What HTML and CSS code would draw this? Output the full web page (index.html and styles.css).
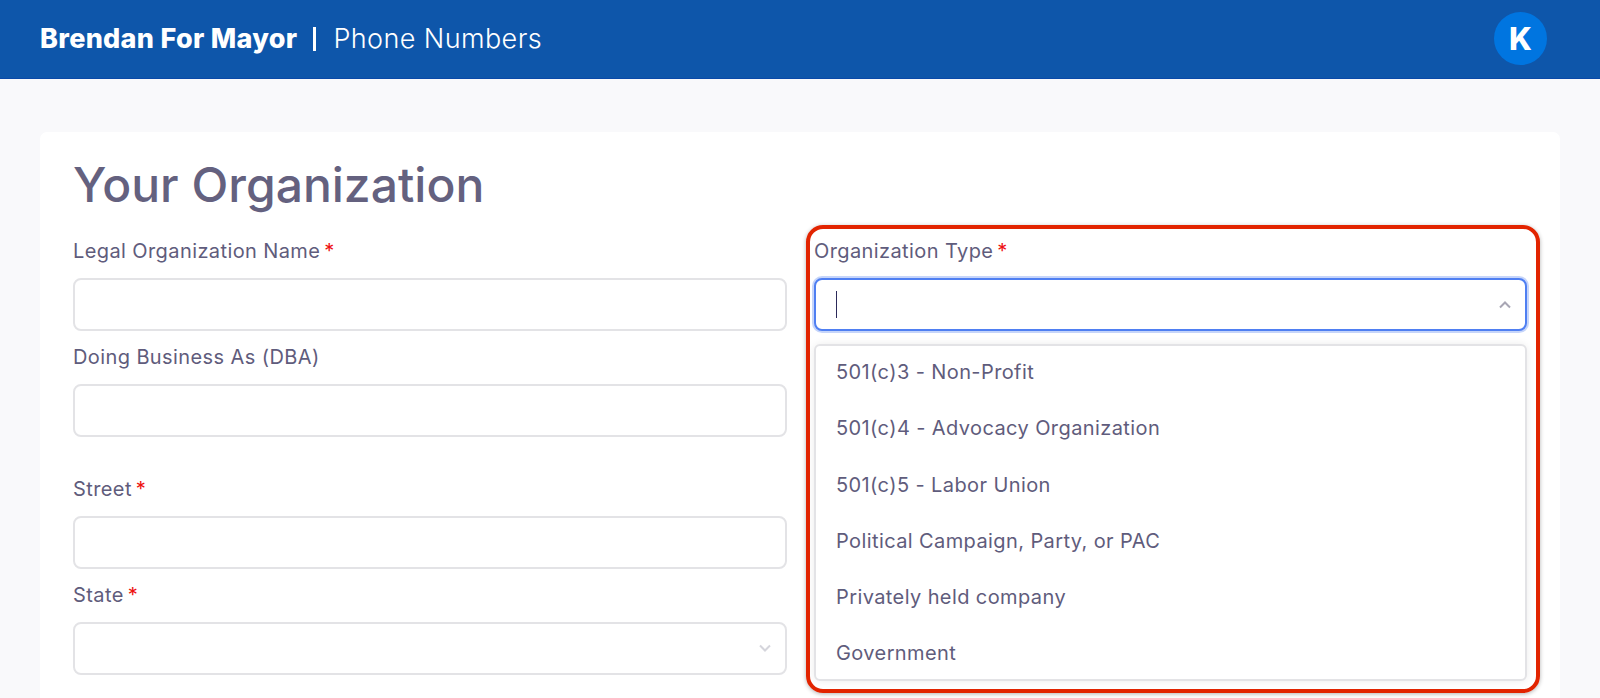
FILE: index.html
```html
<!DOCTYPE html>
<html lang="en">
<head>
<meta charset="utf-8">
<title>Phone Numbers</title>
<link rel="stylesheet" href="styles.css">
</head>
<body>
<header class="topbar">
  <div class="crumbs">
    <span class="brand">Brendan For Mayor</span>
    <span class="sep"></span>
    <span class="page-name">Phone Numbers</span>
  </div>
  <div class="avatar">K</div>
</header>
<main class="main">
  <section class="card">
    <h1 class="title">Your Organization</h1>
    <div class="columns">
      <div class="col">
        <div class="field">
          <label class="label">Legal Organization Name<span class="req">*</span></label>
          <div class="input"></div>
        </div>
        <div class="field">
          <label class="label">Doing Business As (DBA)</label>
          <div class="input"></div>
        </div>
        <div class="field address">
          <label class="label">Street<span class="req">*</span></label>
          <div class="input"></div>
        </div>
        <div class="field">
          <label class="label">State<span class="req">*</span></label>
          <div class="input select">
            <svg class="chev chev-down" width="14" height="8" viewBox="0 0 14 8"><path d="M2 1.5 7 6.5 12 1.5" fill="none" stroke="#d5d5dc" stroke-width="2"/></svg>
          </div>
        </div>
      </div>
      <div class="col col-right">
        <div class="field">
          <label class="label">Organization Type<span class="req">*</span></label>
          <div class="input select focused">
            <span class="caret"></span>
            <svg class="chev" width="14" height="8" viewBox="0 0 14 8"><path d="M2 6.5 7 1.5 12 6.5" fill="none" stroke="#a8a6b4" stroke-width="2"/></svg>
          </div>
        </div>
        <ul class="menu">
          <li class="option">501(c)3 - Non-Profit</li>
          <li class="option">501(c)4 - Advocacy Organization</li>
          <li class="option">501(c)5 - Labor Union</li>
          <li class="option">Political Campaign, Party, or PAC</li>
          <li class="option">Privately held company</li>
          <li class="option">Government</li>
        </ul>
        <div class="highlight"></div>
      </div>
    </div>
  </section>
</main>
</body>
</html>
```
FILE: styles.css
```css
* { box-sizing: border-box; }
html, body { margin: 0; height: 698px; overflow: hidden; }
body {
  background: #f9f9fb;
  font-family: "Inter", "Liberation Sans", sans-serif;
  color: #5f5c7c;
}
.topbar {
  height: 79px;
  background: #0e56aa;
  border-bottom: 1px solid #0a49a8;
  display: flex;
  align-items: center;
  justify-content: space-between;
  padding: 0 53px 1px 40px;
  color: #fff;
}
.crumbs { display: flex; align-items: center; }
.brand { font-size: 27px; font-weight: 800; white-space: nowrap; letter-spacing: .3px; }
.sep { width: 3px; height: 24px; background: #fff; margin: 0 17px 0 16px; }
.page-name { font-size: 27px; font-weight: 300; letter-spacing: 0.4px; white-space: nowrap; }
.avatar {
  width: 53px; height: 53px; border-radius: 50%;
  background: #0075e0;
  display: flex; align-items: center; justify-content: center;
  font-size: 31px; font-weight: 800;
}
.main { padding: 53px 40px 0; }
.card {
  background: #fff;
  border-radius: 7px;
  padding: 20px 33px 40px;
  height: 600px;
}
.title {
  margin: 0 0 21px;
  font-size: 48px;
  line-height: 66px;
  font-weight: 500;
  color: #64617f;
}
.columns { display: grid; grid-template-columns: 714px 713px; column-gap: 27px; }
.col { position: relative; min-width: 0; }
.field { display: flex; flex-direction: column; height: 105.5px; }
.field.address { margin-top: 27px; }
.label { font-size: 20px; letter-spacing: .4px; line-height: 24px; height: 39px; font-weight: 400; white-space: nowrap; color: #5f5c7c; }
.req { color: #ee1111; margin-left: 4px; }
.input {
  height: 53px;
  flex: none;
  background: #fff;
  border: 2px solid #e3e3e6;
  border-radius: 8px;
  position: relative;
  display: flex;
  align-items: center;
  justify-content: space-between;
  padding: 0 13px 0 20px;
}
.input.select { justify-content: flex-end; }
.input.focused {
  justify-content: space-between;
  border-color: #4f7ff2;
  box-shadow: 0 0 0 2px #c6d5fa;
}
.caret { width: 1px; height: 27px; background: #2c2a5a; }
.menu {
  position: absolute;
  left: 0; right: 0; top: 105px;
  height: 337px;
  margin: 0;
  padding: 12px 0;
  list-style: none;
  background: #fff;
  border: 2px solid #e3e3e6;
  border-radius: 6px;
  box-shadow: 0 0 8px rgba(0,0,0,.08);
  display: flex;
  flex-direction: column;
  gap: 28.3px;
}
.option { padding: 0 20px; font-size: 20px; letter-spacing: .4px; line-height: 28px; white-space: nowrap; color: #5f5c7c; }
.highlight {
  position: absolute;
  left: -8px; right: -13px; top: -14px;
  height: 468px;
  border: 4px solid #e22400;
  border-radius: 17px;
  box-shadow: 0 1px 4px rgba(0,0,0,.3);
  pointer-events: none;
}
```
